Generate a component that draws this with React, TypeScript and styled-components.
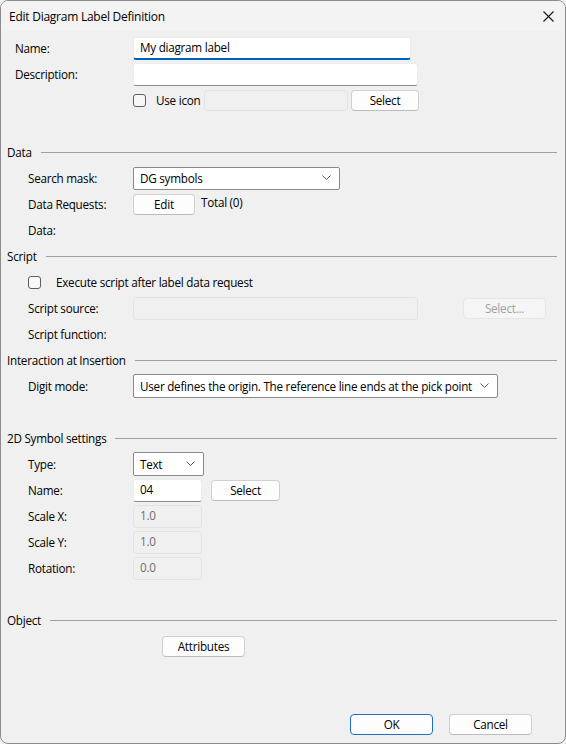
import React from "react";
import styled, { createGlobalStyle, css } from "styled-components";

const Global = createGlobalStyle`
  html, body { margin: 0; padding: 0; background: #f0f0f0; }
  * { box-sizing: border-box; }
  body {
    font-family: "Segoe UI", "Open Sans", "Noto Sans", sans-serif;
    font-size: 11.7px;
    letter-spacing: -0.25px;
    color: #000;
  }
`;

const Window = styled.div`
  width: 566px;
  height: 744px;
  border: 1px solid #8c8c8c;
  border-radius: 8px;
  overflow: hidden;
  background: #f0f0f0;
  display: flex;
  flex-direction: column;
`;

const TitleBar = styled.div`
  height: 30px;
  flex: none;
  background: #f3f3f3;
  display: flex;
  align-items: center;
  justify-content: space-between;
  padding-left: 8px;
  padding-right: 10px;
  font-size: 12px;
`;

const CloseBtn = styled.div`
  width: 14px;
  height: 14px;
  display: flex;
  align-items: center;
  justify-content: center;
`;

const Body = styled.div`
  flex: 1;
  display: flex;
  flex-direction: column;
  padding: 4px 8px 0 0;
`;

const Row = styled.div`
  height: 26px;
  display: grid;
  grid-template-columns: 132px 1fr;
  align-items: center;
`;

const Label = styled.div<{ $indent: number }>`
  padding-left: ${(p) => p.$indent}px;
  white-space: nowrap;
`;

const Controls = styled.div`
  display: flex;
  align-items: center;
  height: 100%;
`;

const SectionHeader = styled.div`
  height: 26px;
  display: flex;
  align-items: center;
  padding-left: 6px;
  gap: 9px;
`;

const SectionLine = styled.div`
  flex: 1;
  height: 1px;
  background: #a0a0a0;
  margin-top: 1px;
`;

const TextInput = styled.div<{ $w: number; $h?: number; $focused?: boolean; $disabled?: boolean }>`
  width: ${(p) => p.$w}px;
  height: ${(p) => p.$h ?? 23}px;
  display: flex;
  align-items: center;
  padding: 0 0 2px 6px;
  border-radius: 3px;
  flex: none;
  ${(p) =>
    p.$disabled
      ? css`
          background: #f0f0f0;
          border: 1px solid #e3e3e3;
          color: #6e6e6e;
        `
      : p.$focused
      ? css`
          background: #fff;
          border: 1px solid #ececec;
          border-bottom: 2px solid #005fb8;
        `
      : css`
          background: #fff;
          border: 1px solid #ececec;
          border-bottom: 1px solid #8a8a8a;
        `}
`;

const Button = styled.div<{ $w: number; $primary?: boolean; $disabled?: boolean }>`
  width: ${(p) => p.$w}px;
  height: 21px;
  border-radius: 4px;
  display: flex;
  align-items: center;
  justify-content: center;
  padding-bottom: 1px;
  background: ${(p) => (p.$disabled ? "#f5f5f5" : "#fdfdfd")};
  border: 1px solid ${(p) => (p.$primary ? "#1f6fc0" : p.$disabled ? "#e6e6e6" : "#d0d0d0")};
  border-bottom-color: ${(p) => (p.$primary ? "#1f6fc0" : p.$disabled ? "#e6e6e6" : "#bcbcbc")};
  color: ${(p) => (p.$disabled ? "#a0a0a0" : "#000")};
  flex: none;
`;

const Select = styled.div<{ $w: number; $h?: number }>`
  width: ${(p) => p.$w}px;
  height: ${(p) => p.$h ?? 23}px;
  background: #fff;
  border: 1px solid #8a8a8a;
  border-radius: 2px;
  display: flex;
  align-items: center;
  justify-content: space-between;
  gap: 6px;
  padding: 0 8px 1px 6px;
  white-space: nowrap;
  overflow: hidden;
`;

const CheckGroup = styled.div<{ $w?: number }>`
  display: flex;
  align-items: center;
  flex: none;
  ${(p) => (p.$w ? `width: ${p.$w}px;` : "")}
`;

const CheckBox = styled.div`
  width: 13px;
  height: 13px;
  border: 1px solid #5e5e5e;
  border-radius: 3px;
  background: #f7f7f7;
  flex: none;
`;

const CheckText = styled.span<{ $gap: number }>`
  margin-left: ${(p) => p.$gap}px;
  white-space: nowrap;
`;

const Spacer = styled.div<{ $w: number }>`
  width: ${(p) => p.$w}px;
  flex: none;
`;

const TotalText = styled.span`
  margin-left: 6px;
  align-self: flex-start;
  margin-top: 3px;
`;

const EmptyRow = styled.div`
  height: 26px;
`;

const Footer = styled.div`
  margin-top: auto;
  display: flex;
  justify-content: flex-end;
  gap: 16px;
  padding: 0 25px 8px 0;
`;

const Chevron = () => (
  <svg width="9" height="5" viewBox="0 0 9 5" fill="none" style={{ flex: "none" }}>
    <path d="M0.5 0.5 L4.5 4.5 L8.5 0.5" stroke="#5a5a5a" strokeWidth="1" />
  </svg>
);

const CloseIcon = () => (
  <svg width="11" height="11" viewBox="0 0 11 11" fill="none">
    <path d="M0.5 0.5 L10.5 10.5 M10.5 0.5 L0.5 10.5" stroke="#1a1a1a" strokeWidth="1.1" />
  </svg>
);

const Section = ({ title }: { title: string }) => (
  <SectionHeader>
    <span>{title}</span>
    <SectionLine />
  </SectionHeader>
);

export default function App() {
  return (
    <>
      <Global />
      <Window>
        <TitleBar>
          <span>Edit Diagram Label Definition</span>
          <CloseBtn>
            <CloseIcon />
          </CloseBtn>
        </TitleBar>
        <Body>
          <Row>
            <Label $indent={14}>Name:</Label>
            <Controls>
              <TextInput $w={278} $focused>My diagram label</TextInput>
            </Controls>
          </Row>
          <Row>
            <Label $indent={14}>Description:</Label>
            <Controls>
              <TextInput $w={285} />
            </Controls>
          </Row>
          <Row>
            <Label $indent={14} />
            <Controls>
              <CheckGroup $w={71}>
                <CheckBox />
                <CheckText $gap={10}>Use icon</CheckText>
              </CheckGroup>
              <TextInput $w={144} $h={21} $disabled />
              <Spacer $w={3} />
              <Button $w={68}>Select</Button>
            </Controls>
          </Row>
          <EmptyRow />

          <Section title="Data" />
          <Row>
            <Label $indent={27}>Search mask:</Label>
            <Controls>
              <Select $w={207} $h={23}>
                <span>DG symbols</span>
                <Chevron />
              </Select>
            </Controls>
          </Row>
          <Row>
            <Label $indent={27}>Data Requests:</Label>
            <Controls>
              <Button $w={62}>Edit</Button>
              <TotalText>Total (0)</TotalText>
            </Controls>
          </Row>
          <Row>
            <Label $indent={27}>Data:</Label>
            <Controls />
          </Row>

          <Section title="Script" />
          <Row>
            <Label $indent={27}>
              <CheckGroup>
                <CheckBox />
                <CheckText $gap={15}>Execute script after label data request</CheckText>
              </CheckGroup>
            </Label>
            <Controls />
          </Row>
          <Row>
            <Label $indent={27}>Script source:</Label>
            <Controls>
              <TextInput $w={285} $h={23} $disabled />
              <Spacer $w={45} />
              <Button $w={83} $disabled>
                Select...
              </Button>
            </Controls>
          </Row>
          <Row>
            <Label $indent={27}>Script function:</Label>
            <Controls />
          </Row>

          <Section title="Interaction at Insertion" />
          <Row>
            <Label $indent={27}>Digit mode:</Label>
            <Controls>
              <Select $w={365} $h={24}>
                <span>User defines the origin. The reference line ends at the pick point</span>
                <Chevron />
              </Select>
            </Controls>
          </Row>
          <EmptyRow />

          <Section title="2D Symbol settings" />
          <Row>
            <Label $indent={27}>Type:</Label>
            <Controls>
              <Select $w={71} $h={24}>
                <span>Text</span>
                <Chevron />
              </Select>
            </Controls>
          </Row>
          <Row>
            <Label $indent={27}>Name:</Label>
            <Controls>
              <TextInput $w={69} $h={23}>04</TextInput>
              <Spacer $w={9} />
              <Button $w={69}>Select</Button>
            </Controls>
          </Row>
          <Row>
            <Label $indent={27}>Scale X:</Label>
            <Controls>
              <TextInput $w={69} $h={23} $disabled>1.0</TextInput>
            </Controls>
          </Row>
          <Row>
            <Label $indent={27}>Scale Y:</Label>
            <Controls>
              <TextInput $w={69} $h={23} $disabled>1.0</TextInput>
            </Controls>
          </Row>
          <Row>
            <Label $indent={27}>Rotation:</Label>
            <Controls>
              <TextInput $w={69} $h={23} $disabled>0.0</TextInput>
            </Controls>
          </Row>
          <EmptyRow />

          <Section title="Object" />
          <Row>
            <Label $indent={27} />
            <Controls>
              <Spacer $w={29} />
              <Button $w={83}>Attributes</Button>
            </Controls>
          </Row>

          <Footer>
            <Button $w={83} $primary>
              OK
            </Button>
            <Button $w={83}>Cancel</Button>
          </Footer>
        </Body>
      </Window>
    </>
  );
}
